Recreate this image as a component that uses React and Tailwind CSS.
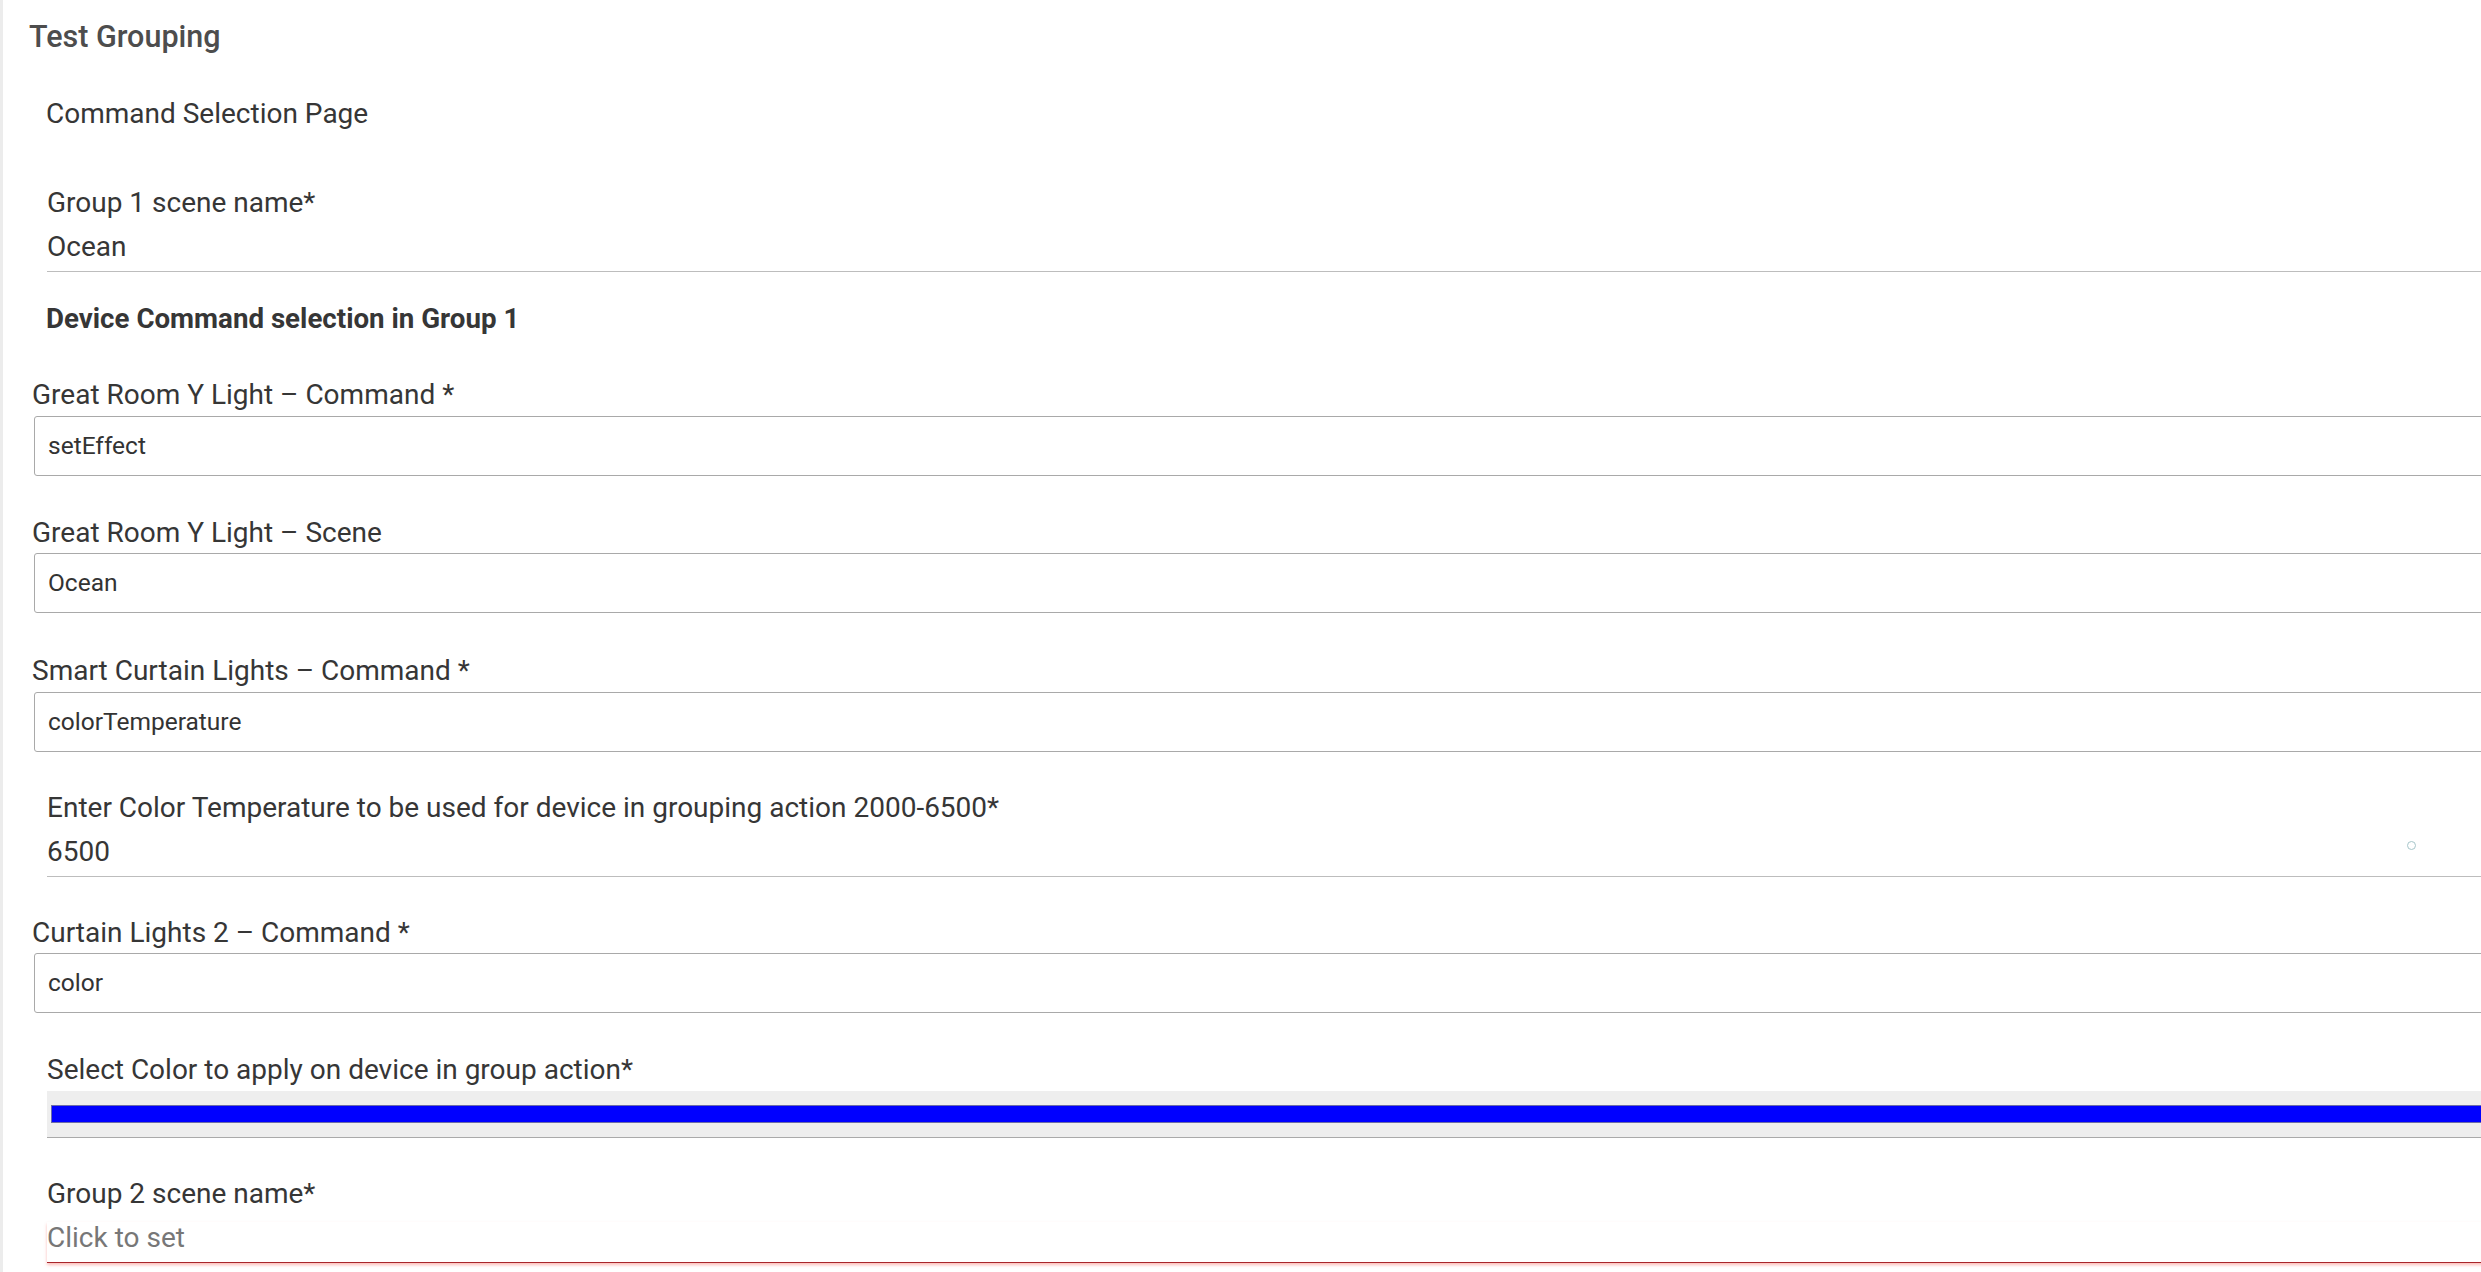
import React from 'react';

const font = { fontFamily: 'Roboto, "Noto Sans", sans-serif' };

function BoxField({ label, value, mt = 'mt-[44px]', boxMt = 'mt-[5px]' }) {
  return (
    <div className={`${mt} ml-[29px]`}>
      <div className="h-[32px] leading-[32px] text-[28px] text-[#363636] whitespace-nowrap">{label}</div>
      <div className={`${boxMt} ml-[2px] h-[60px] border border-[#a9a9a9] rounded-[3px] pl-[13px] leading-[58px] text-[24.5px] text-[#333]`}>
        {value}
      </div>
    </div>
  );
}

function LineField({ label, value, mt, placeholder, invalid, children }) {
  return (
    <div className={`${mt} ml-[44px] relative`}>
      <div className="h-[32px] leading-[32px] text-[28px] text-[#363636] whitespace-nowrap">{label}</div>
      <div
        className={`mt-[12px] h-[41px] leading-[32px] text-[28px] border-b ${
          invalid
            ? 'border-[#a8262b] shadow-[0_2px_3px_rgba(244,67,54,0.35)] text-[#777]'
            : 'border-[#bdbdbd] text-[#363636]'
        }`}
      >
        {placeholder || value}
      </div>
      {children}
    </div>
  );
}

export default function App() {
  return (
    <div className="w-full min-h-screen overflow-hidden bg-white" style={font}>
      <div className="w-[2560px] min-h-[1272px] border-l-[3px] border-[#ececec] pb-10">
        {/* Header */}
        <div className="pt-[19px] pl-[26px] h-[55px] leading-[36px] text-[30.5px] font-medium text-[#4d4d4d]">
          Test Grouping
        </div>

        <div className="mt-[43px] ml-[43px] h-[32px] leading-[32px] text-[28px] text-[#363636]">
          Command Selection Page
        </div>

        <LineField mt="mt-[57px]" label="Group 1 scene name*" value="Ocean" />

        <div className="mt-[31px] ml-[43px] h-[32px] leading-[32px] text-[27.7px] font-bold text-[#363636]">
          Device Command selection in Group 1
        </div>

        <BoxField label="Great Room Y Light – Command *" value="setEffect" mt="mt-[44px]" />
        <BoxField label="Great Room Y Light – Scene" value="Ocean" mt="mt-[41px]" boxMt="mt-[4px]" />
        <BoxField label="Smart Curtain Lights – Command *" value="colorTemperature" mt="mt-[42px]" />

        <LineField
          mt="mt-[40px]"
          label="Enter Color Temperature to be used for device in grouping action 2000-6500*"
          value="6500"
        >
          <div className="absolute left-[2360px] top-[49px] w-[9px] h-[9px] rounded-full border border-[#a6c6ca]" />
        </LineField>

        <BoxField label="Curtain Lights 2 – Command *" value="color" mt="mt-[40px]" boxMt="mt-[4px]" />

        {/* Color picker */}
        <div className="mt-[41px] ml-[44px]">
          <div className="h-[32px] leading-[32px] text-[28px] text-[#363636] whitespace-nowrap">
            Select Color to apply on device in group action*
          </div>
          <div className="mt-[5px] h-[47px] bg-[#eeeeee] border-b border-[#aaaaaa] pt-[14px] pl-[4px]">
            <div className="h-[18px] bg-[#0000ff] border border-[#6c6ca8]" />
          </div>
        </div>

        <LineField mt="mt-[40px]" label="Group 2 scene name*" placeholder="Click to set" invalid />
      </div>
    </div>
  );
}
